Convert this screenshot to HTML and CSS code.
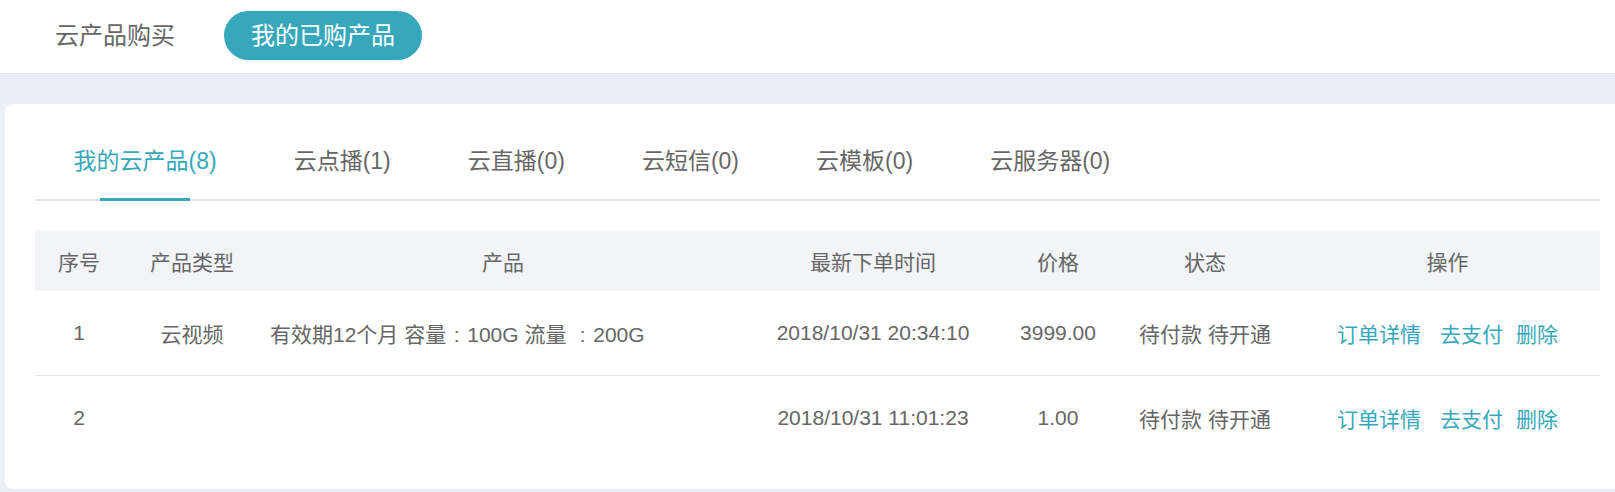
FILE: index.html
```html
<!DOCTYPE html>
<html lang="zh-CN">
<head>
  <meta charset="UTF-8">
  <title>我的已购产品</title>
  <link rel="stylesheet" href="styles.css">
</head>
<body>
  <div class="topbar">
    <a class="top-tab" href="#">云产品购买</a>
    <a class="top-tab active" href="#">我的已购产品</a>
  </div>

  <div class="card">
    <div class="tabs">
      <a class="tab active" href="#">我的云产品(8)</a>
      <a class="tab" href="#">云点播(1)</a>
      <a class="tab" href="#">云直播(0)</a>
      <a class="tab" href="#">云短信(0)</a>
      <a class="tab" href="#">云模板(0)</a>
      <a class="tab" href="#">云服务器(0)</a>
    </div>

    <table class="orders">
      <colgroup>
        <col class="c-no">
        <col class="c-type">
        <col class="c-product">
        <col class="c-time">
        <col class="c-price">
        <col class="c-status">
        <col class="c-ops">
      </colgroup>
      <thead>
        <tr>
          <th>序号</th>
          <th>产品类型</th>
          <th>产品</th>
          <th>最新下单时间</th>
          <th>价格</th>
          <th>状态</th>
          <th>操作</th>
        </tr>
      </thead>
      <tbody>
        <tr>
          <td>1</td>
          <td>云视频</td>
          <td class="product">有效期12个月 容量<span class="colon">:</span>100G 流量 <span class="colon">:</span>200G</td>
          <td>2018/10/31 20:34:10</td>
          <td>3999.00</td>
          <td>待付款 待开通</td>
          <td class="ops"><a href="#" class="detail">订单详情</a><a href="#" class="pay">去支付</a><a href="#">删除</a></td>
        </tr>
        <tr>
          <td>2</td>
          <td></td>
          <td class="product"></td>
          <td>2018/10/31 11:01:23</td>
          <td>1.00</td>
          <td>待付款 待开通</td>
          <td class="ops"><a href="#" class="detail">订单详情</a><a href="#" class="pay">去支付</a><a href="#">删除</a></td>
        </tr>
      </tbody>
    </table>
  </div>
</body>
</html>
```

FILE: styles.css
```css
body { margin: 0; background-color: #eaeef6; font-family: "Liberation Sans", "Noto Sans CJK SC", sans-serif; color: #666; overflow: hidden; }
a { text-decoration: none; }

/* top switch */
.topbar { display: flex; gap: 22px; align-items: flex-start; height: 74px; box-sizing: border-box; padding: 11px 28px 0; background-color: #fff; border-bottom: 1px solid #e3e6ec; }
.top-tab { display: block; line-height: 49px; padding: 0 27px; border-radius: 25px; font-size: 24px; color: #666; }
.top-tab.active { background-color: #37a8bb; color: #fff; }

/* card */
.card { margin: 30px 0 0 5px; background-color: #fff; border-radius: 8px 0 0 8px; padding: 0 15px 29px 30px; }

.tabs { display: flex; padding-top: 42px; border-bottom: 2px solid #dde3e6; }
.tab { position: relative; padding: 0 38.5px 23px; line-height: 30px; font-size: 23px; color: #666; }
.tab.active { color: #37a8bb; }
.tab.active::after { content: ""; position: absolute; left: 50%; bottom: -2px; width: 90px; height: 3px; margin-left: -45px; background-color: #37a8bb; }

/* orders table */
.orders { width: 100%; margin-top: 30px; border-collapse: collapse; table-layout: fixed; font-size: 21px; }
.c-no { width: 88px; }
.c-type { width: 138px; }
.c-product { width: 484px; }
.c-time { width: 256px; }
.c-price { width: 114px; }
.c-status { width: 180px; }
.c-ops { width: 305px; }
.orders th { height: 60px; padding: 0; background-color: #f2f4f8; font-weight: normal; text-align: center; color: #666; }
.orders td { height: 84px; padding: 0; text-align: center; white-space: nowrap; color: #666; }
.orders tbody tr:first-child td { border-bottom: 1px solid #e5e6e8; }
.orders td.product { text-align: left; padding-left: 9px; }
/* full-width colon, centred in its box */
.colon { display: inline-block; width: 1em; text-align: center; }
.ops a { color: #37a8bb; }
.ops .detail { margin-right: 19px; }
.ops .pay { margin-right: 13px; }
```
